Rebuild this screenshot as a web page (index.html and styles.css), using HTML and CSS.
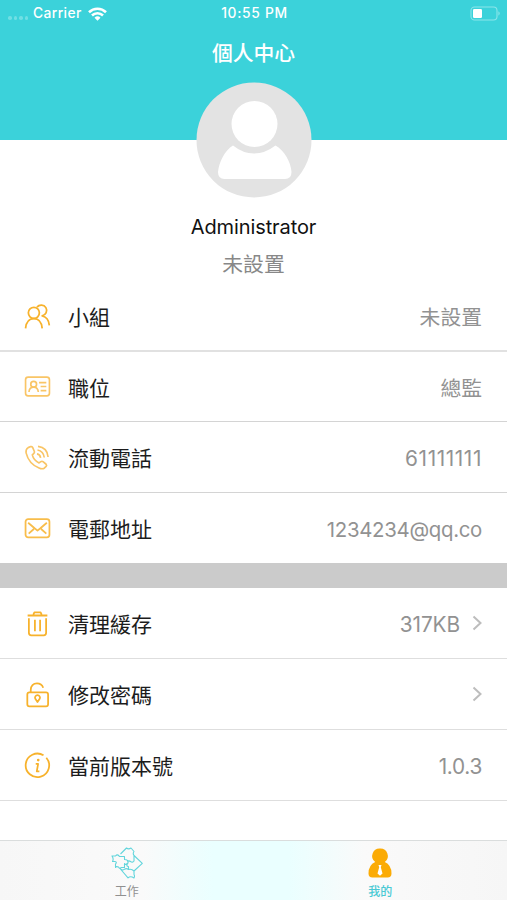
FILE: index.html
```html
<!DOCTYPE html>
<html lang="zh-Hant">
<head>
<meta charset="utf-8">
<title>個人中心</title>
<link rel="stylesheet" href="styles.css">
</head>
<body>
<div class="app">
  <header class="header">
    <div class="status">
      <div class="status-left">
        <span class="signal"><i></i><i></i><i></i><i></i></span>
        <span class="carrier">Carrier</span>
        <svg class="wifi" width="19" height="14" viewBox="0 0 19 14" fill="none" stroke="#fff" stroke-width="2.6"><path d="M1 5.200a12.200 12.200 0 0 1 17 0M4 8.500a7.800 7.800 0 0 1 11 0"/><path d="M9.500 13.800 6.500 10.700a4.300 4.300 0 0 1 6 0z" fill="#fff" stroke="none"/></svg>
      </div>
      <span class="time">10:55 PM</span>
      <div class="status-right">
        <svg width="31" height="15" viewBox="0 0 31 15"><rect x="1" y="1" width="26" height="13" rx="3.500" fill="none" stroke="#8be5ea" stroke-width="1.100"/><rect x="3" y="3" width="9" height="9" rx="1.300" fill="#fff"/><path d="M28.500 5.300q2.200 2.200 0 4.400z" fill="#9ceaee"/></svg>
      </div>
    </div>
    <h1 class="title">個人中心</h1>
  </header>

  <section class="profile">
    <svg class="avatar" width="116" height="116" viewBox="0 0 116 116"><circle cx="58" cy="58" r="57.500" fill="#e3e3e3"/><circle cx="58.500" cy="42" r="23" fill="#fff"/><path d="M37 63.500Q47 71.500 58 71.500T79.500 63.500C88 68 95 80 95.500 90Q95.500 97 89 97H28.500Q22 97 22 90C23 80 29 68 37 63.500Z" fill="#fff"/></svg>
    <div class="name">Administrator</div>
    <div class="sub">未設置</div>
  </section>

  <ul class="list">
    <li class="row">
      <svg class="icon" viewBox="0 0 26 26"><circle cx="9.500" cy="9.500" r="5.300"/><path d="M1.500 24.500C2 18.500 5 15 9.500 15S17 18.500 17.500 24.500M12.500 4A5.200 5.200 0 1 1 17.500 12.300C21 13 24 16.500 24.400 21.500"/></svg>
      <span class="label">小組</span><span class="value">未設置</span>
    </li>
    <li class="row">
      <svg class="icon soft" viewBox="0 0 26 26"><rect x="1.500" y="4" width="23" height="18" rx="2.500"/><circle cx="9.300" cy="10.800" r="2.800"/><path d="M4.800 18.300C5 15.200 6.500 13.600 9.300 13.600S13.500 15.200 13.800 18.300M14.500 9.300H21.500M16 13H21.500M16 17H21.500"/></svg>
      <span class="label">職位</span><span class="value">總監</span>
    </li>
    <li class="row">
      <svg class="icon soft" viewBox="0 0 26 26"><path d="M4 3.500 6.500 2.400Q7.700 2.200 8.300 3.300L10 7.200Q10.300 8.500 9.300 9.200L8 10.500C8.700 13.500 11.500 16.800 14.500 18.200L16.200 17Q17.300 16.300 18.300 17L21.300 19.500Q22.300 20.500 21.300 21.500L19.500 23.300Q17.500 24.500 14.500 23.100C8 20.500 3.500 14.500 2 8.500Q1.500 5 4 3.500ZM12.500 9.500Q15.500 10 16 13.300M13 5.800Q18.800 7 19.500 13M13.500 2.300Q22.500 3.500 23.200 12.500"/></svg>
      <span class="label">流動電話</span><span class="value phone">61111111</span>
    </li>
    <li class="row">
      <svg class="icon mid" viewBox="0 0 26 26"><rect x="1.500" y="4" width="23" height="17.500" rx="2.500"/><path d="M4 7.500 10.500 13 13 15 15.500 13 22 7.500M4.500 18 9.500 13.500M21.500 18 16.500 13.500"/></svg>
      <span class="label">電郵地址</span><span class="value email">1234234@qq.co</span>
    </li>
  </ul>
  <div class="gap"></div>
  <ul class="list second">
    <li class="row">
      <svg class="icon" viewBox="0 0 26 26"><path d="M3.500 5.300H22.500M9 4.500 10 2.200H16L17 4.500M4.700 8V22Q4.700 24.500 7 24.500H19Q21.300 24.500 21.300 22V8M10.500 9.500V20.500M15.500 9.500V20.500"/></svg>
      <span class="label">清理緩存</span><span class="value size">317KB</span>
      <svg class="chevron" width="10" height="16" viewBox="0 0 10 16"><path d="M1.500 1.500 8.500 8l-7 6.500"/></svg>
    </li>
    <li class="row">
      <svg class="icon" viewBox="0 0 26 26"><rect x="3.200" y="11" width="20" height="13.500" rx="2"/><path d="M6.500 11V8.500C6.500 4.500 9 2.300 12.500 2.300Q17 2.300 18.500 6.500M13 20.300 10.900 17.200A2.400 2.400 0 1 1 15.100 17.200Z"/></svg>
      <span class="label">修改密碼</span>
      <svg class="chevron" width="10" height="16" viewBox="0 0 10 16"><path d="M1.500 1.500 8.500 8l-7 6.500"/></svg>
    </li>
    <li class="row">
      <svg class="icon" viewBox="0 0 26 26"><path d="M18.800 3.200A11.300 11.300 0 1 0 21.500 5.500"/><circle cx="13.700" cy="7.800" r="1.300" class="fill"/><path d="M11.300 11.500H13.600L12.300 18.700H14.800"/></svg>
      <span class="label">當前版本號</span><span class="value version">1.0.3</span>
    </li>
  </ul>

  <nav class="tabs">
    <a class="tab">
      <svg width="32" height="32" viewBox="0 0 32 32" fill="none" stroke="#62d5dc" stroke-width="1.100" stroke-linejoin="round"><path d="M9.500 7 15.500 1Q17.500 2.800 20 1L23 4.500Q21.500 6.500 23 8.500V14Q21.500 16 19.500 14.500Q17.500 13 16.500 15M1 9H4.500Q6.500 6.500 8.500 9.500H13.500V12.500Q17.500 12.500 17 16Q14.500 18.500 13.500 16.500V20.500H10Q9 22.500 7.500 20Q5 19 4.500 20.500V17Q6.500 14.500 3.500 14.500H1.500Q3 12 1 9ZM23 8.500 31.300 16.300 23 24Q20.500 21.500 17.500 22.500V19.500Q14.500 19.500 17 16M9 21.500 17 30.800Q19.500 28.500 23 31Q24 29 23 27.500V24M10 22Q11.500 24 13.500 22.200Q15.500 20.800 17.500 22.500"/></svg>
      <span>工作</span>
    </a>
    <a class="tab active">
      <svg width="32" height="32" viewBox="0 0 32 32" fill="#fbab05"><path d="M16 1.500A7.500 7.500 0 0 1 20.800 15Q27.500 18 27.500 26.500Q27.500 30.500 23.500 30.500H8.500Q4.500 30.500 4.500 26.500Q4.500 18 11.200 15A7.500 7.500 0 0 1 16 1.500Z"/><path d="M14.500 18H17.500L16.800 20.300 18.500 26.500 16 28.800 13.500 26.500 15.200 20.300Z" fill="#fff"/></svg>
      <span>我的</span>
    </a>
  </nav>
</div>
</body>
</html>
```

FILE: styles.css
```css
* { box-sizing: border-box; }
body {
  margin: 0;
  background: #fff;
  font-family: Inter, "Noto Sans CJK TC", sans-serif;
  color: #1c1c1c;
}
.app { width: 507px; height: 900px; display: flex; flex-direction: column; overflow: hidden; }
.header { height: 140px; flex: none; background: #3bd2da; color: #fff; }
.status {
  height: 27px;
  padding: 0 6px 0 8px;
  display: grid;
  grid-template-columns: 1fr auto 1fr;
  align-items: center;
  font-size: 13.800px;
  font-weight: 500;
  line-height: 27px;
}
.status-left { display: flex; align-items: center; }
.signal { display: flex; gap: 2px; margin-right: 5px; padding-top: 9px; }
.signal i { width: 3.500px; height: 3.500px; border-radius: 50%; background: #70dfe4; }
.carrier { letter-spacing: .4px; }
.time { letter-spacing: .7px; }
.wifi { margin-left: 6px; }
.status-right { display: flex; justify-content: flex-end; }
.title { margin: 12px 0 0; text-align: center; font-size: 20.800px; line-height: 30px; font-weight: 500; }
.profile {
  height: 198px;
  margin-top: -58px;
  flex: none;
  display: flex;
  flex-direction: column;
  align-items: center;
}
.avatar { display: block; flex: none; }
.name { margin-top: 14px; font-size: 20px; line-height: 30px; letter-spacing: -.1px; color: #111; }
.sub { margin-top: 8px; font-size: 20.800px; line-height: 30px; color: #888; }
.list { list-style: none; margin: 0; padding: 0; flex: none; }
.row {
  height: 71px;
  padding: 0 25px 0 24px;
  display: flex;
  align-items: center;
  border-bottom: 1px solid #d4d4d4;
}
.list:not(.second) .row:first-child { height: 72px; padding-top: 2px; border-bottom: 2px solid #e1e1e1; }
.list:not(.second) .row:nth-child(2) { height: 70px; }
.list:not(.second) .row:last-child { height: 70px; border-bottom: 0; }
.icon { width: 27px; height: 27px; flex: none; fill: none; stroke: #f7b22c; stroke-width: 1.700; stroke-linejoin: round; }
.icon.soft { stroke: #f9c566; stroke-width: 1.600; }
.icon.mid { stroke: #f8bd4b; }
.icon .fill { fill: #f7b22c; stroke: none; }
.label { margin-left: 17px; padding-top: 4px; font-size: 21px; line-height: 30px; }
.value { margin-left: auto; padding-top: 4px; font-size: 20.800px; line-height: 30px; color: #929292; }
.phone { letter-spacing: .6px; }
.email { font-size: 20.400px; letter-spacing: -.3px; }
.size { letter-spacing: -.1px; }
.version { letter-spacing: -.3px; }
.chevron { margin-left: auto; fill: none; stroke: #bdbdbd; stroke-width: 2; }
.value + .chevron { margin-left: 12px; }
.gap { height: 25px; flex: none; background: #cbcbcb; }
.second .row { border-color: #dedede; }
.tabs {
  height: 60px;
  margin-top: auto;
  flex: none;
  display: grid;
  grid-template-columns: 1fr 1fr;
  border-top: 1px solid #dadddd;
  background: linear-gradient(90deg, #f7f7f7, #fafafa 28%, #eaffff 42%, #eaffff 57%, #fafafa 72%, #f6f6f6);
}
.tab { display: flex; flex-direction: column; align-items: center; padding-top: 6px; font-size: 12px; line-height: 18px; color: #909090; }
.tab svg { flex: none; }
.tab span { margin-top: 4px; }
.tab.active { color: #4ac9d4; font-weight: 500; }
```
